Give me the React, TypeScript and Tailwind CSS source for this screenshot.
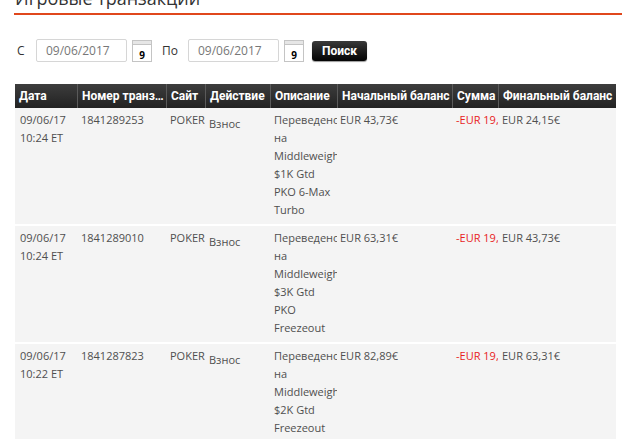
const font = { fontFamily: '"Open Sans", "Liberation Sans", Arial, sans-serif' };
const headFont = { fontFamily: 'Roboto, "Liberation Sans", Arial, sans-serif' };

type Tx = {
  date: string;
  id: string;
  desc: string;
  start: string;
  end: string;
};

const rows: Tx[] = [
  { date: "09/06/17 10:24 ET", id: "1841289253", desc: "Переведено на Middleweight $1K Gtd PKO 6-Max Turbo", start: "EUR 43,73€", end: "EUR 24,15€" },
  { date: "09/06/17 10:24 ET", id: "1841289010", desc: "Переведено на Middleweight $3K Gtd PKO Freezeout", start: "EUR 63,31€", end: "EUR 43,73€" },
  { date: "09/06/17 10:22 ET", id: "1841287823", desc: "Переведено на Middleweight $2K Gtd Freezeout", start: "EUR 82,89€", end: "EUR 63,31€" },
];

const cols = "grid grid-cols-[62px_89px_39px_65px_67px_115px_46px_118px]";

const CalendarIcon = () => (
  <div className="flex h-[22px] w-[20px] flex-col border border-[#c4c4c4] bg-white">
    <div className="h-[4px] border-b border-[#c4c4c4] bg-[#e6e6e6]" />
    <div className="flex flex-1 items-end justify-center pb-[1px] text-[10px] font-bold leading-none text-black">9</div>
  </div>
);

const DateInput = ({ value }: { value: string }) => (
  <div className="flex h-[23px] w-[91px] items-center rounded-[2px] border border-[#d6d6d6] bg-white pl-[9px] text-[12px] text-[#777]">
    {value}
  </div>
);

const headers = [
  "Дата",
  "Номер транзакции",
  "Сайт",
  "Действие",
  "Описание",
  "Начальный баланс",
  "Сумма",
  "Финальный баланс",
];

export default function App() {
  return (
    <div className="h-[439px] w-[622px] overflow-hidden bg-white" style={font}>
      {/* Title, cut by the top edge */}
      <div className="-mt-[14px] pl-[15px] text-[18px] leading-[24px] text-[#333]">Игровые транзакции</div>
      <div className="ml-[14px] mt-[3px] h-[2px] bg-[#e0471c]" />

      {/* Filter */}
      <div className="mt-[24px] flex items-center pl-[17px] text-[12px] text-[#333]">
        <span className="w-[19px]">С</span>
        <DateInput value="09/06/2017" />
        <div className="ml-[5px]">
          <CalendarIcon />
        </div>
        <span className="ml-[10px] w-[26px]">По</span>
        <DateInput value="09/06/2017" />
        <div className="ml-[5px]">
          <CalendarIcon />
        </div>
        <button
          className="ml-[8px] h-[20px] w-[55px] rounded-[3px] bg-gradient-to-b from-[#3a3a3a] to-[#050505] text-[12px] font-bold text-white shadow-[0_1px_1px_rgba(0,0,0,0.4)]"
          style={headFont}
        >
          Поиск
        </button>
      </div>

      {/* Table */}
      <div className="ml-[15px] mt-[22px] w-[601px]">
        <div
          className={`${cols} h-[24px] bg-gradient-to-b from-[#3d3d3d] to-[#222] text-[12px] font-bold text-white`}
          style={headFont}
        >
          {headers.map((h, i) => (
            <div
              key={h}
              className={`flex items-center overflow-hidden whitespace-nowrap pl-[4px] ${i > 0 ? "border-l border-[#5a5a5a]" : ""}`}
            >
              <span className={i === 1 ? "truncate" : ""}>{h}</span>
            </div>
          ))}
        </div>

        {rows.map((r) => (
          <div key={r.id} className={`${cols} mb-[2px] bg-[#f4f4f4] pb-[5px] pt-[3px] text-[11px] leading-[18px] text-[#4f4f4f]`}>
            <div className="overflow-hidden pl-[5px] pr-[2px]">{r.date}</div>
            <div className="overflow-hidden pl-[4px]">{r.id}</div>
            <div className="overflow-hidden pl-[4px]">POKER</div>
            <div className="overflow-hidden pl-[4px] pt-[4px]">Взнос</div>
            <div className="overflow-hidden pl-[4px]">{r.desc}</div>
            <div className="overflow-hidden whitespace-nowrap pl-[3px]">{r.start}</div>
            <div className="overflow-hidden whitespace-nowrap pl-[4px] text-[#e8231d]">-EUR 19,58€</div>
            <div className="overflow-hidden whitespace-nowrap pl-[4px]">{r.end}</div>
          </div>
        ))}
      </div>
    </div>
  );
}
